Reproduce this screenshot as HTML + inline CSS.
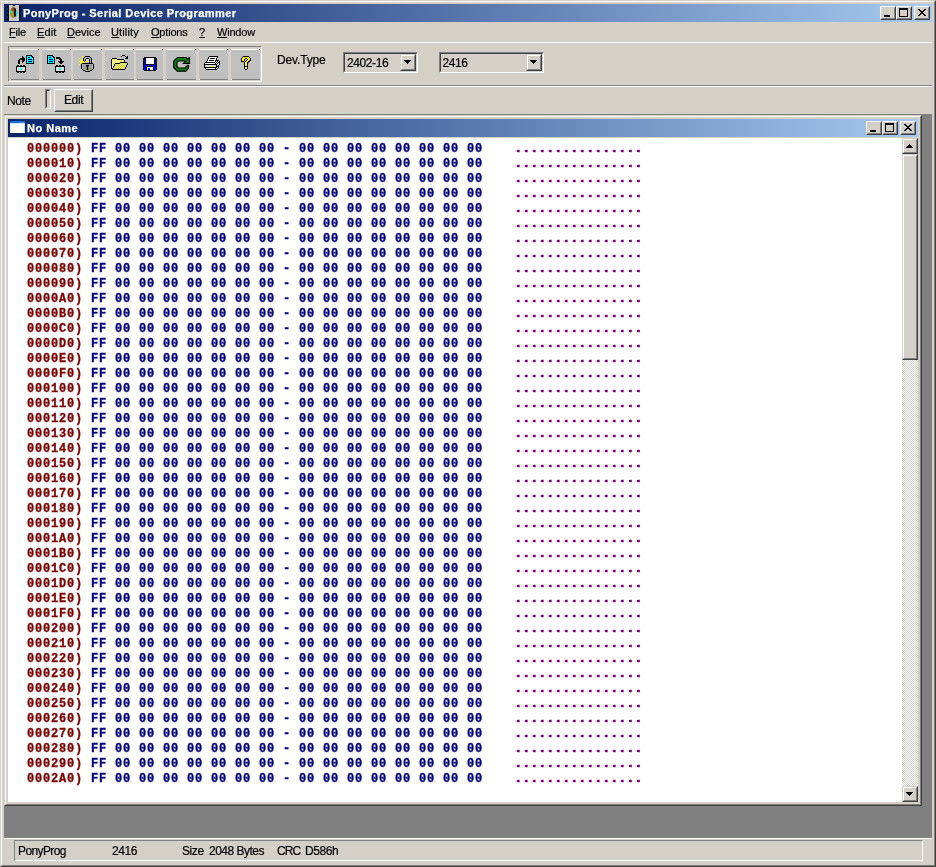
<!DOCTYPE html>
<html>
<head>
<meta charset="utf-8">
<title>PonyProg - Serial Device Programmer</title>
<style>
html,body{margin:0;padding:0;}
body{width:936px;height:867px;overflow:hidden;position:relative;background:#d4d0c8;font-family:"Liberation Sans",sans-serif;font-size:11px;color:#000;}
div,span{box-sizing:border-box;}
.abs{position:absolute;}
.t{position:absolute;white-space:pre;line-height:14px;height:14px;-webkit-text-stroke:0.2px #000;}
.ga{will-change:transform;}
/* main window frame */
#f1{position:absolute;left:0;top:0;width:936px;height:867px;border:1px solid;border-color:#d4d0c8 #404040 #404040 #d4d0c8;}
#f2{position:absolute;left:1px;top:1px;width:934px;height:865px;border:1px solid;border-color:#fff #808080 #808080 #fff;}
.cap{position:absolute;height:18px;background:linear-gradient(to right,#0a246a 0%,#a6caf0 100%);}
.cap .ttl{position:absolute;top:2px;line-height:14px;color:#fff;font-weight:bold;font-size:11px;white-space:pre;letter-spacing:0.5px;-webkit-text-stroke:0.25px #fff;}
.cb{position:absolute;width:16px;height:14px;background:#d4d0c8;border:1px solid;border-color:#fff #404040 #404040 #fff;}
.cb:before{content:"";position:absolute;left:0;top:0;right:0;bottom:0;border:1px solid;border-color:#d4d0c8 #808080 #808080 #d4d0c8;}
.cb i{position:absolute;display:block;box-sizing:border-box;}
.cb .mn{left:3px;top:8px;width:6px;height:2px;background:#000;}
.cb .mx{left:2px;top:1px;width:9px;height:9px;border:1px solid #000;border-top-width:2px;}
.cb svg{position:absolute;left:0;top:0;}
.menu .t{top:25px;font-size:11px;letter-spacing:-0.2px;}
.menu u{text-decoration:underline;text-decoration-thickness:1px;text-underline-offset:1px;}
.hl{position:absolute;height:1px;}
/* toolbar */
#tbf{position:absolute;left:8px;top:46px;width:254px;height:36px;border:1px solid;border-color:#808080 #fff #fff #808080;}
.tb{position:absolute;top:49px;height:31px;background:#c0c0c0;}
.tb:before{content:"";position:absolute;left:0;top:0;right:1px;height:1px;background:#fff;}
.tb:after{content:"";position:absolute;left:1px;bottom:0;right:0;height:1px;background:#808080;}
.tb b{position:absolute;right:0;top:0;width:1px;height:1px;background:#000;}
.tb s{position:absolute;left:0;bottom:0;width:1px;height:1px;background:#fff;}
.ms{font-size:12px;letter-spacing:-0.4px;}
.combo{position:absolute;top:52px;height:21px;border:1px solid;border-color:#808080 #fff #fff #808080;background:#d4d0c8;}
.combo:before{content:"";position:absolute;left:0;top:0;right:0;bottom:0;border:1px solid;border-color:#404040 #d4d0c8 #d4d0c8 #404040;}
.combo .dd{position:absolute;right:1px;top:1px;width:16px;height:17px;background:#d4d0c8;border:1px solid;border-color:#d4d0c8 #404040 #404040 #d4d0c8;}
.combo .dd:before{content:"";position:absolute;left:0;top:0;right:0;bottom:0;border:1px solid;border-color:#fff #808080 #808080 #fff;}
.combo .dd svg{position:absolute;left:0;top:0;}
.btn{position:absolute;background:#d4d0c8;border:1px solid;border-color:#fff #404040 #404040 #fff;}
.btn:before{content:"";position:absolute;left:0;top:0;right:0;bottom:0;border:1px solid;border-color:#d4d0c8 #808080 #808080 #d4d0c8;}
/* MDI */
#mdi{position:absolute;left:4px;top:114px;width:928px;height:724px;background:#808080;}
#child{position:absolute;left:0;top:1px;width:918px;height:691px;background:#d4d0c8;border:1px solid;border-color:#d4d0c8 #404040 #404040 #d4d0c8;}
#child2{position:absolute;left:0;top:0;width:916px;height:689px;border:1px solid;border-color:#fff #808080 #808080 #fff;}
#client{position:absolute;left:4px;top:23px;width:894px;height:664px;background:#fff;overflow:hidden;}
#hex{position:absolute;left:19px;top:4px;font-family:"Liberation Mono",monospace;font-weight:bold;font-size:12px;letter-spacing:0.8px;line-height:15px;-webkit-text-stroke:0.35px currentColor;}
.r{height:15px;white-space:pre;transform-origin:0 11px;transform:scaleY(1.13);}
.a{color:#800000;}.h{color:#000080;}.d{color:#800080;text-shadow:-1px 0 0 #800080;}
#sb{position:absolute;left:898px;top:23px;width:16px;height:664px;background:conic-gradient(#fff 25%,#d4d0c8 0 50%,#fff 0 75%,#d4d0c8 0) 0 0/2px 2px;}
.sbb{position:absolute;left:0;width:16px;background:#d4d0c8;border:1px solid;border-color:#d4d0c8 #404040 #404040 #d4d0c8;}
.sbb:before{content:"";position:absolute;left:0;top:0;right:0;bottom:0;border:1px solid;border-color:#fff #808080 #808080 #fff;}
.sbb svg{position:absolute;left:0;top:0;}
/* status */
#stp{position:absolute;left:14px;top:840px;width:909px;height:21px;border:1px solid;border-color:#808080 #fff #fff #808080;}
.st{top:844px;}
</style>
</head>
<body>
<div class="ga" id="root" style="position:absolute;left:0;top:0;width:936px;height:867px;">
<div id="f1"></div><div id="f2"></div>
<!-- main caption -->
<div class="cap" style="left:4px;top:4px;width:928px;">
<svg class="abs" style="left:3px;top:1px" width="16" height="16" viewBox="7 5 16 16"><rect x="8" y="5" width="12" height="16" fill="#0c0c0c"/><rect x="7" y="6" width="1" height="2" fill="#141414"/><rect x="20" y="6" width="1" height="2" fill="#141414"/><rect x="7" y="10" width="1" height="2" fill="#141414"/><rect x="20" y="10" width="1" height="2" fill="#141414"/><rect x="7" y="14" width="1" height="2" fill="#141414"/><rect x="20" y="14" width="1" height="2" fill="#141414"/><rect x="7" y="18" width="1" height="2" fill="#141414"/><rect x="20" y="18" width="1" height="2" fill="#141414"/><rect x="9" y="5" width="10" height="16" fill="#c8c8c8"/><path d="M12.5 5h3.2l-1.6 1.8z" fill="#282828"/><ellipse cx="13.4" cy="12.3" rx="3.1" ry="5.3" fill="#8c5a12"/><ellipse cx="12.6" cy="14.2" rx="2.3" ry="3.2" fill="#a89418"/><ellipse cx="13.2" cy="9" rx="1.6" ry="1.6" fill="#9a4a14"/><ellipse cx="15" cy="12.6" rx="1.0" ry="4.6" fill="#0c0c0c"/><ellipse cx="11.2" cy="11.9" rx="0.9" ry="1.4" fill="#00f4f4"/><ellipse cx="16.8" cy="13.4" rx="1.0" ry="2.4" fill="#28dcdc"/></svg>
<span class="ttl" id="mt" style="left:19px;letter-spacing:0.42px;">PonyProg - Serial Device Programmer</span>
<div class="cb" style="left:876px;top:2px;"><i class="mn"></i></div>
<div class="cb" style="left:892px;top:2px;"><i class="mx"></i></div>
<div class="cb" style="left:910px;top:2px;"><svg width="14" height="12" viewBox="0 0 14 12" shape-rendering="crispEdges"><path d="M3 2h2v1h1v1h2v-1h1v-1h2v1h-1v1h-1v1h-1v1h1v1h1v1h1v1h-2v-1h-1v-1h-2v1h-1v1h-2v-1h1v-1h1v-1h1v-1h-1v-1h-1v-1h-1z" fill="#000"/></svg></div>
</div>
<!-- menu -->
<div class="menu">
<span class="t" style="left:9px;"><u>F</u>ile</span>
<span class="t" style="left:37px;letter-spacing:0.1px;"><u>E</u>dit</span>
<span class="t" style="left:67px;letter-spacing:0;"><u>D</u>evice</span>
<span class="t" style="left:111px;letter-spacing:0.13px;"><u>U</u>tility</span>
<span class="t" style="left:151px;"><u>O</u>ptions</span>
<span class="t" style="left:199px;"><u>?</u></span>
<span class="t" style="left:217px;"><u>W</u>indow</span>
</div>
<div class="hl" style="left:4px;top:42px;width:928px;background:#fff;"></div>
<!-- toolbar -->
<div id="tbf"></div>
<div class="tb" style="left:10px;width:29px;"><b></b><s></s><svg class="abs" style="left:0;top:0" width="29" height="31" viewBox="10 49 29 31" shape-rendering="crispEdges"><path d="M26 55h6v1h1v1h1v7h-8z" fill="#000"/><path d="M27 56h4v1h1v1h1v5h-6z" fill="#00ffff"/><rect x="28" y="57" width="2" height="1" fill="#000080"/><rect x="28" y="59" width="4" height="1" fill="#000080"/><rect x="28" y="61" width="4" height="1" fill="#000080"/><rect x="16" y="66" width="10" height="6" fill="#000"/><rect x="17" y="65" width="2" height="1" fill="#000"/><rect x="17" y="72" width="2" height="1" fill="#000"/><rect x="20" y="65" width="2" height="1" fill="#000"/><rect x="20" y="72" width="2" height="1" fill="#000"/><rect x="23" y="65" width="2" height="1" fill="#000"/><rect x="23" y="72" width="2" height="1" fill="#000"/><rect x="17" y="67" width="8" height="4" fill="#dcdcdc"/><rect x="20" y="68" width="2" height="2" fill="#00ffff"/><rect x="22" y="56" width="1" height="1" fill="#000"/><rect x="22" y="57" width="2" height="1" fill="#000"/><rect x="20" y="58" width="5" height="1" fill="#000"/><rect x="19" y="59" width="6" height="1" fill="#000"/><rect x="18" y="60" width="2" height="1" fill="#000"/><rect x="22" y="60" width="3" height="1" fill="#000"/><rect x="18" y="61" width="2" height="1" fill="#000"/><rect x="22" y="61" width="2" height="1" fill="#000"/><rect x="18" y="62" width="2" height="1" fill="#000"/><rect x="22" y="62" width="1" height="1" fill="#000"/><rect x="18" y="63" width="2" height="1" fill="#000"/></svg></div>
<div class="tb" style="left:42px;width:29px;"><b></b><s></s><svg class="abs" style="left:0;top:0" width="29" height="31" viewBox="42 49 29 31" shape-rendering="crispEdges"><path d="M47 55h6v1h1v1h1v7h-8z" fill="#000"/><path d="M48 56h4v1h1v1h1v5h-6z" fill="#00ffff"/><rect x="49" y="57" width="2" height="1" fill="#000080"/><rect x="49" y="59" width="4" height="1" fill="#000080"/><rect x="49" y="61" width="4" height="1" fill="#000080"/><rect x="55" y="66" width="10" height="6" fill="#000"/><rect x="56" y="65" width="2" height="1" fill="#000"/><rect x="56" y="72" width="2" height="1" fill="#000"/><rect x="59" y="65" width="2" height="1" fill="#000"/><rect x="59" y="72" width="2" height="1" fill="#000"/><rect x="62" y="65" width="2" height="1" fill="#000"/><rect x="62" y="72" width="2" height="1" fill="#000"/><rect x="56" y="67" width="8" height="4" fill="#dcdcdc"/><rect x="59" y="68" width="2" height="2" fill="#00ffff"/><rect x="56" y="57" width="4" height="1" fill="#000"/><rect x="56" y="58" width="5" height="1" fill="#000"/><rect x="59" y="59" width="3" height="1" fill="#000"/><rect x="60" y="60" width="2" height="1" fill="#000"/><rect x="58" y="61" width="6" height="1" fill="#000"/><rect x="59" y="62" width="4" height="1" fill="#000"/><rect x="60" y="63" width="2" height="1" fill="#000"/></svg></div>
<div class="tb" style="left:73px;width:29px;"><b></b><s></s><svg class="abs" style="left:0;top:0" width="29" height="31" viewBox="73 49 29 31" shape-rendering="crispEdges"><rect x="82" y="56" width="1" height="1" fill="#ffff00"/><rect x="85" y="56" width="5" height="1" fill="#000"/><rect x="82" y="57" width="1" height="1" fill="#ffff00"/><rect x="84" y="57" width="1" height="1" fill="#000"/><rect x="85" y="57" width="5" height="1" fill="#b8b8b8"/><rect x="90" y="57" width="1" height="1" fill="#000"/><rect x="79" y="58" width="1" height="1" fill="#ffff00"/><rect x="82" y="58" width="1" height="1" fill="#ffff00"/><rect x="83" y="58" width="1" height="1" fill="#000"/><rect x="84" y="58" width="2" height="1" fill="#b8b8b8"/><rect x="86" y="58" width="3" height="1" fill="#000"/><rect x="89" y="58" width="2" height="1" fill="#b8b8b8"/><rect x="91" y="58" width="1" height="1" fill="#000"/><rect x="80" y="59" width="1" height="1" fill="#ffff00"/><rect x="82" y="59" width="1" height="1" fill="#ffff00"/><rect x="83" y="59" width="1" height="1" fill="#000"/><rect x="84" y="59" width="1" height="1" fill="#b8b8b8"/><rect x="85" y="59" width="1" height="1" fill="#000"/><rect x="86" y="59" width="3" height="1" fill="#d8d8e0"/><rect x="89" y="59" width="1" height="1" fill="#000"/><rect x="90" y="59" width="1" height="1" fill="#b8b8b8"/><rect x="91" y="59" width="1" height="1" fill="#000"/><rect x="81" y="60" width="2" height="1" fill="#ffff00"/><rect x="83" y="60" width="1" height="1" fill="#000"/><rect x="84" y="60" width="1" height="1" fill="#b8b8b8"/><rect x="85" y="60" width="1" height="1" fill="#000"/><rect x="86" y="60" width="3" height="1" fill="#d8d8e0"/><rect x="89" y="60" width="1" height="1" fill="#000"/><rect x="90" y="60" width="1" height="1" fill="#b8b8b8"/><rect x="91" y="60" width="1" height="1" fill="#000"/><rect x="79" y="61" width="5" height="1" fill="#ffff00"/><rect x="84" y="61" width="1" height="1" fill="#000"/><rect x="85" y="61" width="4" height="1" fill="#ffff00"/><rect x="89" y="61" width="1" height="1" fill="#000"/><rect x="90" y="61" width="1" height="1" fill="#b8b8b8"/><rect x="91" y="61" width="1" height="1" fill="#000"/><rect x="81" y="62" width="4" height="1" fill="#ffff00"/><rect x="89" y="62" width="1" height="1" fill="#000"/><rect x="90" y="62" width="1" height="1" fill="#b8b8b8"/><rect x="91" y="62" width="1" height="1" fill="#000"/><rect x="80" y="63" width="1" height="1" fill="#ffff00"/><rect x="82" y="63" width="11" height="1" fill="#000"/><rect x="79" y="64" width="1" height="1" fill="#ffff00"/><rect x="81" y="64" width="1" height="1" fill="#000"/><rect x="82" y="64" width="1" height="1" fill="#bcbcbc"/><rect x="83" y="64" width="9" height="1" fill="#a0a0a0"/><rect x="92" y="64" width="1" height="1" fill="#bcbcbc"/><rect x="93" y="64" width="1" height="1" fill="#000"/><rect x="81" y="65" width="1" height="1" fill="#000"/><rect x="82" y="65" width="1" height="1" fill="#bcbcbc"/><rect x="83" y="65" width="3" height="1" fill="#a0a0a0"/><rect x="86" y="65" width="3" height="1" fill="#000"/><rect x="89" y="65" width="3" height="1" fill="#a0a0a0"/><rect x="92" y="65" width="1" height="1" fill="#bcbcbc"/><rect x="93" y="65" width="1" height="1" fill="#000"/><rect x="81" y="66" width="1" height="1" fill="#000"/><rect x="82" y="66" width="1" height="1" fill="#bcbcbc"/><rect x="83" y="66" width="3" height="1" fill="#a0a0a0"/><rect x="86" y="66" width="1" height="1" fill="#505050"/><rect x="87" y="66" width="1" height="1" fill="#000"/><rect x="88" y="66" width="1" height="1" fill="#505050"/><rect x="89" y="66" width="3" height="1" fill="#a0a0a0"/><rect x="92" y="66" width="1" height="1" fill="#bcbcbc"/><rect x="93" y="66" width="1" height="1" fill="#000"/><rect x="81" y="67" width="1" height="1" fill="#000"/><rect x="82" y="67" width="1" height="1" fill="#bcbcbc"/><rect x="83" y="67" width="4" height="1" fill="#a0a0a0"/><rect x="87" y="67" width="1" height="1" fill="#000"/><rect x="88" y="67" width="4" height="1" fill="#a0a0a0"/><rect x="92" y="67" width="1" height="1" fill="#bcbcbc"/><rect x="93" y="67" width="1" height="1" fill="#000"/><rect x="81" y="68" width="1" height="1" fill="#000"/><rect x="82" y="68" width="1" height="1" fill="#bcbcbc"/><rect x="83" y="68" width="3" height="1" fill="#a0a0a0"/><rect x="86" y="68" width="1" height="1" fill="#808000"/><rect x="87" y="68" width="1" height="1" fill="#000"/><rect x="88" y="68" width="1" height="1" fill="#808000"/><rect x="89" y="68" width="3" height="1" fill="#a0a0a0"/><rect x="92" y="68" width="1" height="1" fill="#bcbcbc"/><rect x="93" y="68" width="1" height="1" fill="#000"/><rect x="82" y="69" width="1" height="1" fill="#000"/><rect x="83" y="69" width="3" height="1" fill="#a0a0a0"/><rect x="86" y="69" width="1" height="1" fill="#808000"/><rect x="87" y="69" width="1" height="1" fill="#000"/><rect x="88" y="69" width="1" height="1" fill="#808000"/><rect x="89" y="69" width="3" height="1" fill="#a0a0a0"/><rect x="92" y="69" width="1" height="1" fill="#000"/><rect x="83" y="70" width="2" height="1" fill="#000"/><rect x="85" y="70" width="5" height="1" fill="#a0a0a0"/><rect x="90" y="70" width="2" height="1" fill="#000"/><rect x="85" y="71" width="5" height="1" fill="#000"/></svg></div>
<div class="tb" style="left:105px;width:29px;"><b></b><s></s><svg class="abs" style="left:0;top:0" width="29" height="31" viewBox="105 49 29 31" shape-rendering="crispEdges"><defs><pattern id="p4yw" width="2" height="2" patternUnits="userSpaceOnUse"><rect width="2" height="2" fill="#ffff00"/><rect width="1" height="1" fill="#fff"/><rect x="1" y="1" width="1" height="1" fill="#fff"/></pattern><pattern id="p4yg" width="2" height="2" patternUnits="userSpaceOnUse"><rect width="2" height="2" fill="#ffff00"/><rect width="1" height="1" fill="#c0c0c0"/><rect x="1" y="1" width="1" height="1" fill="#c0c0c0"/></pattern><pattern id="p4bw" width="2" height="2" patternUnits="userSpaceOnUse"><rect width="2" height="2" fill="#e0e0e0"/><rect width="1" height="1" fill="#000"/></pattern></defs><path d="M112 59h5v1h7v3h-4v1h-5l-3 5z" fill="url(#p4yw)"/><path d="M115 64h5v-1h7l-2 6h-13z" fill="url(#p4yg)"/><rect x="112" y="58" width="5" height="1" fill="#000"/><rect x="117" y="59" width="7" height="1" fill="#000"/><rect x="112" y="69" width="13" height="1" fill="#000"/><rect x="111" y="59" width="1" height="10" fill="#000"/><rect x="124" y="60" width="1" height="2" fill="#000"/><rect x="115" y="63" width="5" height="1" fill="#000"/><rect x="120" y="62" width="7" height="1" fill="#000"/><rect x="127" y="63" width="1" height="2" fill="#000"/><rect x="126" y="65" width="1" height="2" fill="#000"/><rect x="125" y="67" width="1" height="2" fill="#000"/><rect x="114" y="64" width="1" height="2" fill="#000"/><rect x="113" y="66" width="1" height="2" fill="#000"/><rect x="112" y="68" width="1" height="1" fill="#000"/><rect x="121" y="56" width="1" height="1" fill="#000"/><rect x="122" y="55" width="3" height="1" fill="#000"/><rect x="125" y="56" width="1" height="1" fill="#000"/><rect x="126" y="57" width="1" height="1" fill="#000"/><rect x="127" y="56" width="1" height="1" fill="#000"/><rect x="126" y="57" width="2" height="1" fill="#000"/><rect x="125" y="58" width="3" height="1" fill="#000"/></svg></div>
<div class="tb" style="left:136px;width:27px;"><b></b><s></s><svg class="abs" style="left:0;top:0" width="27" height="31" viewBox="136 49 27 31" shape-rendering="crispEdges"><path d="M144 57h12v1h1v12h-1v1h-12v-1h-1v-12h1z" fill="#000"/><rect x="144" y="58" width="12" height="12" fill="#0000ff"/><rect x="144" y="59" width="1" height="1" fill="#000"/><rect x="155" y="59" width="1" height="1" fill="#000"/><rect x="145" y="58" width="10" height="7" fill="#000"/><rect x="146" y="58" width="8" height="6" fill="#fff"/><rect x="146" y="66" width="8" height="4" fill="#000"/><rect x="147" y="67" width="6" height="3" fill="#e8e8e8"/><rect x="148" y="68" width="2" height="2" fill="#0000ff"/><rect x="150" y="67" width="2" height="3" fill="#fff"/></svg></div>
<div class="tb" style="left:166px;width:30px;"><b></b><s></s><svg class="abs" style="left:0;top:0" width="30" height="31" viewBox="166 49 30 31"><path d="M177.3 57.5H186L187.5 58.8L189.5 57.5V63.5H183.5L185.8 61H178.3L176.9 62.3V66.6L178.3 68H184.8L187.6 65.3H188.5V68.3L185.8 71.2H177.3L173.6 67.5V61.2Z" fill="#008000" stroke="#000" stroke-width="1.2" stroke-linejoin="miter"/></svg></div>
<div class="tb" style="left:199px;width:29px;"><b></b><s></s><svg class="abs" style="left:0;top:0" width="29" height="31" viewBox="199 49 29 31" shape-rendering="crispEdges"><rect x="209" y="56" width="9" height="1" fill="#000"/><rect x="208" y="57" width="1" height="1" fill="#000"/><rect x="209" y="57" width="8" height="1" fill="#fff"/><rect x="217" y="57" width="1" height="1" fill="#000"/><rect x="208" y="58" width="1" height="1" fill="#000"/><rect x="209" y="58" width="1" height="1" fill="#fff"/><rect x="210" y="58" width="5" height="1" fill="#000"/><rect x="215" y="58" width="1" height="1" fill="#fff"/><rect x="216" y="58" width="1" height="1" fill="#000"/><rect x="207" y="59" width="1" height="1" fill="#000"/><rect x="208" y="59" width="8" height="1" fill="#fff"/><rect x="216" y="59" width="1" height="1" fill="#000"/><rect x="207" y="60" width="1" height="1" fill="#000"/><rect x="208" y="60" width="1" height="1" fill="#fff"/><rect x="209" y="60" width="5" height="1" fill="#000"/><rect x="214" y="60" width="1" height="1" fill="#fff"/><rect x="215" y="60" width="4" height="1" fill="#000"/><rect x="206" y="61" width="1" height="1" fill="#000"/><rect x="207" y="61" width="8" height="1" fill="#fff"/><rect x="215" y="61" width="1" height="1" fill="#000"/><rect x="216" y="61" width="1" height="1" fill="#fff"/><rect x="217" y="61" width="1" height="1" fill="#000"/><rect x="218" y="61" width="1" height="1" fill="#fff"/><rect x="219" y="61" width="1" height="1" fill="#000"/><rect x="205" y="62" width="10" height="1" fill="#000"/><rect x="215" y="62" width="1" height="1" fill="#fff"/><rect x="216" y="62" width="1" height="1" fill="#000"/><rect x="217" y="62" width="1" height="1" fill="#fff"/><rect x="218" y="62" width="2" height="1" fill="#000"/><rect x="204" y="63" width="1" height="1" fill="#000"/><rect x="205" y="63" width="10" height="1" fill="#fff"/><rect x="215" y="63" width="1" height="1" fill="#000"/><rect x="216" y="63" width="1" height="1" fill="#fff"/><rect x="217" y="63" width="1" height="1" fill="#000"/><rect x="218" y="63" width="1" height="1" fill="#fff"/><rect x="219" y="63" width="1" height="1" fill="#000"/><rect x="204" y="64" width="13" height="1" fill="#000"/><rect x="217" y="64" width="2" height="1" fill="#dcdcdc"/><rect x="219" y="64" width="1" height="1" fill="#000"/><rect x="204" y="65" width="1" height="1" fill="#000"/><rect x="205" y="65" width="11" height="1" fill="#dcdcdc"/><rect x="216" y="65" width="1" height="1" fill="#000"/><rect x="217" y="65" width="1" height="1" fill="#dcdcdc"/><rect x="218" y="65" width="1" height="1" fill="#000"/><rect x="204" y="66" width="1" height="1" fill="#000"/><rect x="205" y="66" width="6" height="1" fill="#dcdcdc"/><rect x="211" y="66" width="3" height="1" fill="#ffff00"/><rect x="214" y="66" width="2" height="1" fill="#dcdcdc"/><rect x="216" y="66" width="3" height="1" fill="#000"/><rect x="204" y="67" width="13" height="1" fill="#000"/><rect x="217" y="67" width="1" height="1" fill="#fff"/><rect x="218" y="67" width="1" height="1" fill="#000"/><rect x="205" y="68" width="1" height="1" fill="#000"/><rect x="206" y="68" width="9" height="1" fill="#fff"/><rect x="215" y="68" width="1" height="1" fill="#000"/><rect x="216" y="68" width="1" height="1" fill="#fff"/><rect x="217" y="68" width="1" height="1" fill="#000"/><rect x="206" y="69" width="11" height="1" fill="#000"/></svg></div>
<div class="tb" style="left:231px;width:29px;"><b></b><s></s><svg class="abs" style="left:0;top:0" width="29" height="31" viewBox="231 49 29 31" shape-rendering="crispEdges"><rect x="243" y="56" width="6" height="1" fill="#000"/><rect x="242" y="57" width="1" height="1" fill="#000"/><rect x="243" y="57" width="6" height="1" fill="#ffff00"/><rect x="249" y="57" width="1" height="1" fill="#000"/><rect x="241" y="58" width="1" height="1" fill="#000"/><rect x="242" y="58" width="3" height="1" fill="#ffff00"/><rect x="245" y="58" width="2" height="1" fill="#000"/><rect x="247" y="58" width="3" height="1" fill="#ffff00"/><rect x="250" y="58" width="1" height="1" fill="#000"/><rect x="241" y="59" width="1" height="1" fill="#000"/><rect x="242" y="59" width="2" height="1" fill="#ffff00"/><rect x="244" y="59" width="1" height="1" fill="#000"/><rect x="245" y="59" width="2" height="1" fill="#d8d8e0"/><rect x="247" y="59" width="1" height="1" fill="#000"/><rect x="248" y="59" width="2" height="1" fill="#ffff00"/><rect x="250" y="59" width="1" height="1" fill="#000"/><rect x="241" y="60" width="1" height="1" fill="#000"/><rect x="242" y="60" width="2" height="1" fill="#ffff00"/><rect x="244" y="60" width="1" height="1" fill="#000"/><rect x="246" y="60" width="1" height="1" fill="#000"/><rect x="247" y="60" width="2" height="1" fill="#ffff00"/><rect x="249" y="60" width="2" height="1" fill="#000"/><rect x="241" y="61" width="3" height="1" fill="#000"/><rect x="245" y="61" width="1" height="1" fill="#000"/><rect x="246" y="61" width="2" height="1" fill="#ffff00"/><rect x="248" y="61" width="2" height="1" fill="#000"/><rect x="244" y="62" width="1" height="1" fill="#000"/><rect x="245" y="62" width="2" height="1" fill="#ffff00"/><rect x="247" y="62" width="2" height="1" fill="#000"/><rect x="244" y="63" width="1" height="1" fill="#000"/><rect x="245" y="63" width="2" height="1" fill="#ffff00"/><rect x="247" y="63" width="1" height="1" fill="#000"/><rect x="244" y="64" width="1" height="1" fill="#000"/><rect x="245" y="64" width="2" height="1" fill="#ffff00"/><rect x="247" y="64" width="1" height="1" fill="#000"/><rect x="244" y="65" width="1" height="1" fill="#000"/><rect x="245" y="65" width="2" height="1" fill="#ffff00"/><rect x="247" y="65" width="1" height="1" fill="#000"/><rect x="244" y="66" width="4" height="1" fill="#000"/><rect x="244" y="67" width="1" height="1" fill="#000"/><rect x="245" y="67" width="2" height="1" fill="#ffff00"/><rect x="247" y="67" width="1" height="1" fill="#000"/><rect x="244" y="68" width="1" height="1" fill="#000"/><rect x="245" y="68" width="2" height="1" fill="#ffff00"/><rect x="247" y="68" width="1" height="1" fill="#000"/><rect x="245" y="69" width="2" height="1" fill="#000"/></svg></div>
<span class="t ms" id="dvt" style="left:277px;top:53px;letter-spacing:-0.15px;">Dev.Type</span>
<div class="combo" style="left:343px;width:75px;"><span class="t ms" style="left:3px;top:3px;">2402-16</span><div class="dd"><svg width="14" height="15" viewBox="0 0 14 15" shape-rendering="crispEdges"><path d="M3 5h7v1h-1v1h-1v1h-1v1h-1v-1h-1v-1h-1v-1h-1z" fill="#000"/></svg></div></div>
<div class="combo" style="left:439px;width:105px;"><span class="t ms" style="left:2.5px;top:3px;">2416</span><div class="dd"><svg width="14" height="15" viewBox="0 0 14 15" shape-rendering="crispEdges"><path d="M3 5h7v1h-1v1h-1v1h-1v1h-1v-1h-1v-1h-1v-1h-1z" fill="#000"/></svg></div></div>
<div class="hl" style="left:4px;top:85px;width:928px;background:#808080;"></div>
<div class="hl" style="left:4px;top:86px;width:928px;background:#fff;"></div>
<!-- note bar -->
<span class="t ms" style="left:7px;top:94px;">Note</span>
<div class="abs" style="left:45px;top:89px;width:6px;height:20px;border:1px solid;border-color:#808080 #fff #fff #808080;"><div class="abs" style="left:0;top:0;width:4px;height:18px;border:1px solid;border-color:#404040 #d4d0c8 #d4d0c8 #404040;"></div></div>
<div class="btn" style="left:54px;top:89px;width:39px;height:23px;"><span class="t ms" style="left:9px;top:3px;">Edit</span></div>
<!-- MDI client -->
<div id="mdi">
<div id="child"><div id="child2">
<div class="cap" style="left:2px;top:2px;width:910px;">
<svg class="abs" style="left:2px;top:2px" width="15" height="12" viewBox="0 0 15 12"><rect x="0" y="0" width="15" height="12" fill="#fffffa"/><rect x="0" y="0" width="15" height="2.2" fill="#1470e0"/><rect x="14.4" y="2" width="0.6" height="10" fill="#a0c8f8"/><circle cx="13.3" cy="1.3" r="0.6" fill="#f07020"/><rect x="10" y="0.8" width="0.8" height="0.8" fill="#70a8f0"/><rect x="11.5" y="0.8" width="0.8" height="0.8" fill="#70a8f0"/></svg>
<span class="ttl" id="ct" style="left:19px;letter-spacing:0.5px;">No Name</span>
<div class="cb" style="left:858px;top:2px;"><i class="mn"></i></div>
<div class="cb" style="left:874px;top:2px;"><i class="mx"></i></div>
<div class="cb" style="left:892px;top:2px;"><svg width="14" height="12" viewBox="0 0 14 12" shape-rendering="crispEdges"><path d="M3 2h2v1h1v1h2v-1h1v-1h2v1h-1v1h-1v1h-1v1h1v1h1v1h1v1h-2v-1h-1v-1h-2v1h-1v1h-2v-1h1v-1h1v-1h1v-1h-1v-1h-1v-1h-1z" fill="#000"/></svg></div>
</div>
<div id="client" style="left:2px;top:21px;">
<div id="hex">
<div class="r"><span class="a">000000)</span> <span class="h">FF 00 00 00 00 00 00 00 - 00 00 00 00 00 00 00 00</span>    <span class="d">................</span></div>
<div class="r"><span class="a">000010)</span> <span class="h">FF 00 00 00 00 00 00 00 - 00 00 00 00 00 00 00 00</span>    <span class="d">................</span></div>
<div class="r"><span class="a">000020)</span> <span class="h">FF 00 00 00 00 00 00 00 - 00 00 00 00 00 00 00 00</span>    <span class="d">................</span></div>
<div class="r"><span class="a">000030)</span> <span class="h">FF 00 00 00 00 00 00 00 - 00 00 00 00 00 00 00 00</span>    <span class="d">................</span></div>
<div class="r"><span class="a">000040)</span> <span class="h">FF 00 00 00 00 00 00 00 - 00 00 00 00 00 00 00 00</span>    <span class="d">................</span></div>
<div class="r"><span class="a">000050)</span> <span class="h">FF 00 00 00 00 00 00 00 - 00 00 00 00 00 00 00 00</span>    <span class="d">................</span></div>
<div class="r"><span class="a">000060)</span> <span class="h">FF 00 00 00 00 00 00 00 - 00 00 00 00 00 00 00 00</span>    <span class="d">................</span></div>
<div class="r"><span class="a">000070)</span> <span class="h">FF 00 00 00 00 00 00 00 - 00 00 00 00 00 00 00 00</span>    <span class="d">................</span></div>
<div class="r"><span class="a">000080)</span> <span class="h">FF 00 00 00 00 00 00 00 - 00 00 00 00 00 00 00 00</span>    <span class="d">................</span></div>
<div class="r"><span class="a">000090)</span> <span class="h">FF 00 00 00 00 00 00 00 - 00 00 00 00 00 00 00 00</span>    <span class="d">................</span></div>
<div class="r"><span class="a">0000A0)</span> <span class="h">FF 00 00 00 00 00 00 00 - 00 00 00 00 00 00 00 00</span>    <span class="d">................</span></div>
<div class="r"><span class="a">0000B0)</span> <span class="h">FF 00 00 00 00 00 00 00 - 00 00 00 00 00 00 00 00</span>    <span class="d">................</span></div>
<div class="r"><span class="a">0000C0)</span> <span class="h">FF 00 00 00 00 00 00 00 - 00 00 00 00 00 00 00 00</span>    <span class="d">................</span></div>
<div class="r"><span class="a">0000D0)</span> <span class="h">FF 00 00 00 00 00 00 00 - 00 00 00 00 00 00 00 00</span>    <span class="d">................</span></div>
<div class="r"><span class="a">0000E0)</span> <span class="h">FF 00 00 00 00 00 00 00 - 00 00 00 00 00 00 00 00</span>    <span class="d">................</span></div>
<div class="r"><span class="a">0000F0)</span> <span class="h">FF 00 00 00 00 00 00 00 - 00 00 00 00 00 00 00 00</span>    <span class="d">................</span></div>
<div class="r"><span class="a">000100)</span> <span class="h">FF 00 00 00 00 00 00 00 - 00 00 00 00 00 00 00 00</span>    <span class="d">................</span></div>
<div class="r"><span class="a">000110)</span> <span class="h">FF 00 00 00 00 00 00 00 - 00 00 00 00 00 00 00 00</span>    <span class="d">................</span></div>
<div class="r"><span class="a">000120)</span> <span class="h">FF 00 00 00 00 00 00 00 - 00 00 00 00 00 00 00 00</span>    <span class="d">................</span></div>
<div class="r"><span class="a">000130)</span> <span class="h">FF 00 00 00 00 00 00 00 - 00 00 00 00 00 00 00 00</span>    <span class="d">................</span></div>
<div class="r"><span class="a">000140)</span> <span class="h">FF 00 00 00 00 00 00 00 - 00 00 00 00 00 00 00 00</span>    <span class="d">................</span></div>
<div class="r"><span class="a">000150)</span> <span class="h">FF 00 00 00 00 00 00 00 - 00 00 00 00 00 00 00 00</span>    <span class="d">................</span></div>
<div class="r"><span class="a">000160)</span> <span class="h">FF 00 00 00 00 00 00 00 - 00 00 00 00 00 00 00 00</span>    <span class="d">................</span></div>
<div class="r"><span class="a">000170)</span> <span class="h">FF 00 00 00 00 00 00 00 - 00 00 00 00 00 00 00 00</span>    <span class="d">................</span></div>
<div class="r"><span class="a">000180)</span> <span class="h">FF 00 00 00 00 00 00 00 - 00 00 00 00 00 00 00 00</span>    <span class="d">................</span></div>
<div class="r"><span class="a">000190)</span> <span class="h">FF 00 00 00 00 00 00 00 - 00 00 00 00 00 00 00 00</span>    <span class="d">................</span></div>
<div class="r"><span class="a">0001A0)</span> <span class="h">FF 00 00 00 00 00 00 00 - 00 00 00 00 00 00 00 00</span>    <span class="d">................</span></div>
<div class="r"><span class="a">0001B0)</span> <span class="h">FF 00 00 00 00 00 00 00 - 00 00 00 00 00 00 00 00</span>    <span class="d">................</span></div>
<div class="r"><span class="a">0001C0)</span> <span class="h">FF 00 00 00 00 00 00 00 - 00 00 00 00 00 00 00 00</span>    <span class="d">................</span></div>
<div class="r"><span class="a">0001D0)</span> <span class="h">FF 00 00 00 00 00 00 00 - 00 00 00 00 00 00 00 00</span>    <span class="d">................</span></div>
<div class="r"><span class="a">0001E0)</span> <span class="h">FF 00 00 00 00 00 00 00 - 00 00 00 00 00 00 00 00</span>    <span class="d">................</span></div>
<div class="r"><span class="a">0001F0)</span> <span class="h">FF 00 00 00 00 00 00 00 - 00 00 00 00 00 00 00 00</span>    <span class="d">................</span></div>
<div class="r"><span class="a">000200)</span> <span class="h">FF 00 00 00 00 00 00 00 - 00 00 00 00 00 00 00 00</span>    <span class="d">................</span></div>
<div class="r"><span class="a">000210)</span> <span class="h">FF 00 00 00 00 00 00 00 - 00 00 00 00 00 00 00 00</span>    <span class="d">................</span></div>
<div class="r"><span class="a">000220)</span> <span class="h">FF 00 00 00 00 00 00 00 - 00 00 00 00 00 00 00 00</span>    <span class="d">................</span></div>
<div class="r"><span class="a">000230)</span> <span class="h">FF 00 00 00 00 00 00 00 - 00 00 00 00 00 00 00 00</span>    <span class="d">................</span></div>
<div class="r"><span class="a">000240)</span> <span class="h">FF 00 00 00 00 00 00 00 - 00 00 00 00 00 00 00 00</span>    <span class="d">................</span></div>
<div class="r"><span class="a">000250)</span> <span class="h">FF 00 00 00 00 00 00 00 - 00 00 00 00 00 00 00 00</span>    <span class="d">................</span></div>
<div class="r"><span class="a">000260)</span> <span class="h">FF 00 00 00 00 00 00 00 - 00 00 00 00 00 00 00 00</span>    <span class="d">................</span></div>
<div class="r"><span class="a">000270)</span> <span class="h">FF 00 00 00 00 00 00 00 - 00 00 00 00 00 00 00 00</span>    <span class="d">................</span></div>
<div class="r"><span class="a">000280)</span> <span class="h">FF 00 00 00 00 00 00 00 - 00 00 00 00 00 00 00 00</span>    <span class="d">................</span></div>
<div class="r"><span class="a">000290)</span> <span class="h">FF 00 00 00 00 00 00 00 - 00 00 00 00 00 00 00 00</span>    <span class="d">................</span></div>
<div class="r"><span class="a">0002A0)</span> <span class="h">FF 00 00 00 00 00 00 00 - 00 00 00 00 00 00 00 00</span>    <span class="d">................</span></div></div>
</div>
<div id="sb" style="left:896px;top:21px;">
<div class="sbb" style="top:0;height:16px;"><svg width="14" height="14" viewBox="0 0 14 14" shape-rendering="crispEdges"><path d="M6 5h1v1h1v1h1v1h1v1h-7v-1h1v-1h1v-1h1z" fill="#000"/></svg></div>
<div class="sbb" style="top:16px;height:206px;"></div>
<div class="sbb" style="top:648px;height:16px;"><svg width="14" height="14" viewBox="0 0 14 14" shape-rendering="crispEdges"><path d="M3 5h7v1h-1v1h-1v1h-1v1h-1v-1h-1v-1h-1v-1h-1z" fill="#000"/></svg></div>
</div>
</div></div>
</div>
<!-- status bar -->
<div class="hl" style="left:4px;top:838px;width:928px;background:#fff;"></div>
<div id="stp"></div>
<span class="t ms st" style="left:18px;letter-spacing:-0.6px;">PonyProg</span>
<span class="t ms st" style="left:112px;">2416</span>
<span class="t ms st" style="left:182px;">Size</span>
<span class="t ms st" style="left:209px;letter-spacing:-0.5px;">2048 Bytes</span>
<span class="t ms st" style="left:277px;letter-spacing:-0.9px;">CRC</span>
<span class="t ms st" style="left:305px;">D586h</span>
</div><!--root-->
</body>
</html>
